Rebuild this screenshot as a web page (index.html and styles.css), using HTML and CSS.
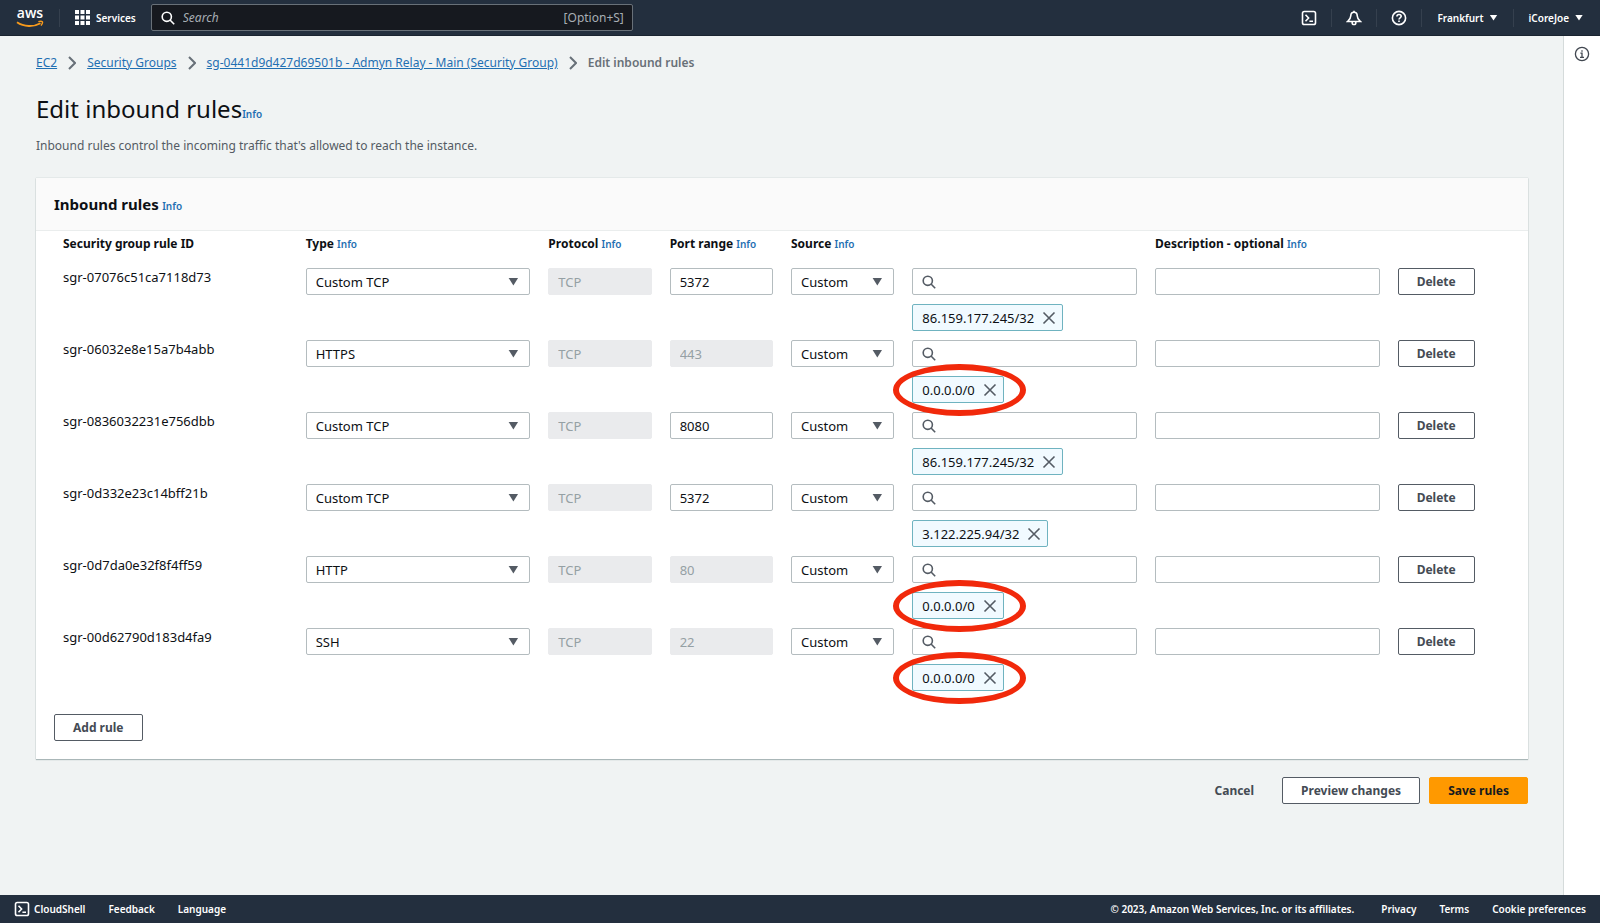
FILE: index.html
```html
<!DOCTYPE html>
<html lang="en">
<head>
<meta charset="utf-8">
<title>Edit inbound rules | EC2</title>
<link rel="stylesheet" href="styles.css">
</head>
<body>
<svg class="sprite" aria-hidden="true">
  <symbol id="i-search" viewBox="0 0 14 14"><circle cx="5.8" cy="5.8" r="4.6"/><path d="M9 9l4.2 4.2"/></symbol>
  <symbol id="i-x" viewBox="0 0 14 14"><path d="M1.5 1.5l11 11M12.5 1.5l-11 11"/></symbol>
  <symbol id="i-shell" viewBox="0 0 16 16"><rect x="1.5" y="1.5" width="13" height="13" rx="1.8"/><path d="M4.5 4.8L7.6 8l-3.1 3.2M8.4 11.3h3.6"/></symbol>
  <symbol id="i-chevron" viewBox="0 0 8 14"><path d="M1 1l6 6-6 6"/></symbol>
</svg>

<header class="topbar">
  <a class="logo" href="#" aria-label="AWS home">
    <svg viewBox="0 -5 28 30" width="28" height="30">
      <text x="14" y="10" text-anchor="middle" class="logo-text">aws</text>
      <path d="M1 14.2c7 4.8 16.500 5 23.500 1" class="logo-smile"/>
      <path d="M22.300 13.600c1.700-.4 3.500-.4 4 .1.500.6-.2 2.500-1.300 3.900" class="logo-smile tip"/>
    </svg>
  </a>
  <button class="services" type="button">
    <svg width="15" height="15" viewBox="0 0 15 15"><path d="M0 0h4v4H0zM5.500 0h4v4h-4zM11 0h4v4h-4zM0 5.500h4v4H0zM5.500 5.500h4v4h-4zM11 5.500h4v4h-4zM0 11h4v4H0zM5.500 11h4v4h-4zM11 11h4v4h-4z"/></svg>
    Services
  </button>
  <label class="topsearch">
    <svg class="icon"><use href="#i-search"/></svg>
    <input type="search" placeholder="Search" aria-label="Search">
    <span>[Option+S]</span>
  </label>
  <nav class="topnav" aria-label="Account">
    <button type="button" aria-label="CloudShell"><svg class="icon"><use href="#i-shell"/></svg></button>
    <button type="button" aria-label="Notifications"><svg class="icon" viewBox="0 0 16 16"><path d="M8 2.200c-2.200 0-3.200 1.500-3.200 3.600 0 2.800-1.300 4-3.200 5.700h12.800c-1.900-1.700-3.200-2.900-3.200-5.700 0-2.100-1-3.600-3.200-3.600z"/><path d="M8 .8v1.400M6.200 12v.9c0 2.200 3.600 2.200 3.600 0V12"/></svg></button>
    <button type="button" aria-label="Help"><svg class="icon" viewBox="0 0 16 16"><circle cx="8" cy="8" r="6.600"/><path d="M5.900 6.600c0-2.900 4.300-2.700 4.300-.3 0 1.500-2.200 1.500-2.200 3.200M8 10.600v1.500"/></svg></button>
    <button type="button" class="menu">Frankfurt</button>
    <button type="button" class="menu">iCoreJoe</button>
  </nav>
</header>

<div class="body">
  <main class="content">
    <nav class="crumbs" aria-label="Breadcrumbs">
      <a href="#">EC2</a>
      <svg><use href="#i-chevron"/></svg>
      <a href="#">Security Groups</a>
      <svg><use href="#i-chevron"/></svg>
      <a href="#">sg-0441d9d427d69501b - Admyn Relay - Main (Security Group)</a>
      <svg><use href="#i-chevron"/></svg>
      <span>Edit inbound rules</span>
    </nav>
    <div class="title"><h1>Edit inbound rules</h1><a class="info" href="#">Info</a></div>
    <p class="lead">Inbound rules control the incoming traffic that's allowed to reach the instance.</p>

    <section class="card">
      <div class="card-head"><h2>Inbound rules</h2> <a class="info" href="#">Info</a></div>
      <div class="card-body">
        <table class="rules">
          <colgroup><col class="wide"><col class="wide"><col><col><col><col class="wide"><col class="wide"><col></colgroup>
          <thead>
            <tr>
              <th scope="col">Security group rule ID</th>
              <th scope="col">Type <a class="info" href="#">Info</a></th>
              <th scope="col">Protocol <a class="info" href="#">Info</a></th>
              <th scope="col">Port range <a class="info" href="#">Info</a></th>
              <th scope="col" colspan="2">Source <a class="info" href="#">Info</a></th>
              <th scope="col">Description - optional <a class="info" href="#">Info</a></th>
              <td></td>
            </tr>
          </thead>
          <tbody>
            <tr>
              <td class="id">sgr-07076c51ca7118d73</td>
              <td><span class="select"><select aria-label="Type"><option>Custom TCP</option></select></span></td>
              <td><input class="field" aria-label="Protocol" value="TCP" disabled></td>
              <td><input class="field" aria-label="Port range" value="5372"></td>
              <td><span class="select"><select aria-label="Source"><option>Custom</option></select></span></td>
              <td><label class="field find"><svg class="icon"><use href="#i-search"/></svg><input aria-label="Source address"></label>
                <span class="tag">86.159.177.245/32<button type="button" aria-label="Remove"><svg class="icon"><use href="#i-x"/></svg></button></span></td>
              <td><input class="field" aria-label="Description"></td>
              <td><button class="btn" type="button">Delete</button></td>
            </tr>
            <tr>
              <td class="id">sgr-06032e8e15a7b4abb</td>
              <td><span class="select"><select aria-label="Type"><option>HTTPS</option></select></span></td>
              <td><input class="field" aria-label="Protocol" value="TCP" disabled></td>
              <td><input class="field" aria-label="Port range" value="443" disabled></td>
              <td><span class="select"><select aria-label="Source"><option>Custom</option></select></span></td>
              <td><label class="field find"><svg class="icon"><use href="#i-search"/></svg><input aria-label="Source address"></label>
                <span class="tag ringed">0.0.0.0/0<button type="button" aria-label="Remove"><svg class="icon"><use href="#i-x"/></svg></button></span></td>
              <td><input class="field" aria-label="Description"></td>
              <td><button class="btn" type="button">Delete</button></td>
            </tr>
            <tr>
              <td class="id">sgr-0836032231e756dbb</td>
              <td><span class="select"><select aria-label="Type"><option>Custom TCP</option></select></span></td>
              <td><input class="field" aria-label="Protocol" value="TCP" disabled></td>
              <td><input class="field" aria-label="Port range" value="8080"></td>
              <td><span class="select"><select aria-label="Source"><option>Custom</option></select></span></td>
              <td><label class="field find"><svg class="icon"><use href="#i-search"/></svg><input aria-label="Source address"></label>
                <span class="tag">86.159.177.245/32<button type="button" aria-label="Remove"><svg class="icon"><use href="#i-x"/></svg></button></span></td>
              <td><input class="field" aria-label="Description"></td>
              <td><button class="btn" type="button">Delete</button></td>
            </tr>
            <tr>
              <td class="id">sgr-0d332e23c14bff21b</td>
              <td><span class="select"><select aria-label="Type"><option>Custom TCP</option></select></span></td>
              <td><input class="field" aria-label="Protocol" value="TCP" disabled></td>
              <td><input class="field" aria-label="Port range" value="5372"></td>
              <td><span class="select"><select aria-label="Source"><option>Custom</option></select></span></td>
              <td><label class="field find"><svg class="icon"><use href="#i-search"/></svg><input aria-label="Source address"></label>
                <span class="tag">3.122.225.94/32<button type="button" aria-label="Remove"><svg class="icon"><use href="#i-x"/></svg></button></span></td>
              <td><input class="field" aria-label="Description"></td>
              <td><button class="btn" type="button">Delete</button></td>
            </tr>
            <tr>
              <td class="id">sgr-0d7da0e32f8f4ff59</td>
              <td><span class="select"><select aria-label="Type"><option>HTTP</option></select></span></td>
              <td><input class="field" aria-label="Protocol" value="TCP" disabled></td>
              <td><input class="field" aria-label="Port range" value="80" disabled></td>
              <td><span class="select"><select aria-label="Source"><option>Custom</option></select></span></td>
              <td><label class="field find"><svg class="icon"><use href="#i-search"/></svg><input aria-label="Source address"></label>
                <span class="tag ringed">0.0.0.0/0<button type="button" aria-label="Remove"><svg class="icon"><use href="#i-x"/></svg></button></span></td>
              <td><input class="field" aria-label="Description"></td>
              <td><button class="btn" type="button">Delete</button></td>
            </tr>
            <tr>
              <td class="id">sgr-00d62790d183d4fa9</td>
              <td><span class="select"><select aria-label="Type"><option>SSH</option></select></span></td>
              <td><input class="field" aria-label="Protocol" value="TCP" disabled></td>
              <td><input class="field" aria-label="Port range" value="22" disabled></td>
              <td><span class="select"><select aria-label="Source"><option>Custom</option></select></span></td>
              <td><label class="field find"><svg class="icon"><use href="#i-search"/></svg><input aria-label="Source address"></label>
                <span class="tag ringed">0.0.0.0/0<button type="button" aria-label="Remove"><svg class="icon"><use href="#i-x"/></svg></button></span></td>
              <td><input class="field" aria-label="Description"></td>
              <td><button class="btn" type="button">Delete</button></td>
            </tr>
          </tbody>
        </table>
        <button class="btn" type="button">Add rule</button>
      </div>
    </section>

    <div class="actions">
      <button class="btn plain" type="button">Cancel</button>
      <button class="btn" type="button">Preview changes</button>
      <button class="btn primary" type="button">Save rules</button>
    </div>
  </main>
  <aside class="rail">
    <button type="button" aria-label="Open help panel"><svg class="icon" viewBox="0 0 16 16"><circle cx="8" cy="8" r="6.600"/><path d="M6.400 7.200H8v4M6 11.300h4M8 4.200v1.500"/></svg></button>
  </aside>
</div>

<footer class="footer">
  <a href="#"><svg class="icon"><use href="#i-shell"/></svg>CloudShell</a>
  <a href="#">Feedback</a>
  <a href="#">Language</a>
  <span class="copy">© 2023, Amazon Web Services, Inc. or its affiliates.</span>
  <a href="#">Privacy</a>
  <a href="#">Terms</a>
  <a href="#">Cookie preferences</a>
</footer>
</body>
</html>
```

FILE: styles.css
```css
* { box-sizing: border-box; }

body {
  margin: 0;
  min-height: 100vh;
  display: flex;
  flex-direction: column;
  background: #f0f3f3;
  color: #0d1014;
  font: 13px/18px "Noto Sans", sans-serif;
}

button, input, select { font: inherit; color: inherit; margin: 0; }
button { background: none; border: 0; padding: 0; }
a { color: #1f6fb2; }
h1, h2, p { margin: 0; }

.sprite { display: none; }
.icon {
  width: 14px;
  height: 14px;
  flex: none;
  fill: none;
  stroke: currentColor;
  stroke-width: 1.6;
}

/* Top bar */
.topbar {
  display: flex;
  align-items: center;
  height: 36px;
  background: #232f3e;
  border-bottom: 1px solid #1a2430;
  color: #fff;
  font-size: 10px;
  font-weight: 600;
}
.logo { display: flex; padding: 0 15px 0 16px; }
.logo-text { font: 600 14px "Open Sans", sans-serif; fill: #fff; }
.logo-smile { fill: none; stroke: #f79a1c; stroke-width: 1.8; }
.logo-smile.tip { stroke-width: 1.4; }
.services {
  display: flex;
  align-items: center;
  gap: 6px;
  height: 18px;
  padding: 0 15px;
  border-left: 1px solid #35404e;
}
.services svg { fill: #fff; }
.topsearch {
  display: flex;
  align-items: center;
  gap: 8px;
  width: 482px;
  height: 27px;
  padding: 0 8px 0 9px;
  background: #16191f;
  border: 1px solid #687078;
  border-radius: 2px;
  font-size: 12px;
  font-weight: 400;
  color: #a7aeb4;
}
.topsearch .icon { color: #fff; }
.topsearch input { flex: 1; min-width: 0; padding: 0; border: 0; background: none; outline: 0; appearance: none; }
.topsearch input::placeholder { color: #a7aeb4; font-style: italic; opacity: 1; }
.topnav { display: flex; margin-left: auto; padding-right: 2px; }
.topnav button { display: flex; align-items: center; height: 18px; padding: 0 14px; }
.topnav button + button { border-left: 1px solid #35404e; }
.topnav .icon { width: 16px; height: 16px; }
.topnav .menu { gap: 6px; padding: 0 15px; }
.menu::after {
  content: "";
  width: 8px;
  height: 6px;
  background: #fff;
  clip-path: polygon(0 0, 100% 0, 50% 100%);
}

/* Page body */
.body { flex: 1; display: flex; }
.content { flex: 1; min-width: 0; padding: 18px 35px 18px 36px; }
.rail {
  width: 37px;
  padding-top: 10px;
  background: #fff;
  border-left: 1px solid #d5dbdb;
  display: flex;
  flex-direction: column;
  align-items: center;
}
.rail .icon { display: block; width: 16px; height: 16px; stroke-width: 1.3; color: #414750; }

.crumbs { display: flex; align-items: center; gap: 11px; font-size: 12px; }
.crumbs svg { width: 8px; height: 14px; fill: none; stroke: #687078; stroke-width: 2; }
.crumbs span { color: #687078; font-weight: 600; }

.info { font-size: 10px; font-weight: 600; text-decoration: none; }
.title { display: flex; align-items: baseline; padding-top: 20px; }
h1 { font-size: 24px; line-height: 34px; font-weight: 400; }
.lead { padding-top: 11px; color: #545b64; font-size: 12px; }

/* Rules card */
.card { margin-top: 23px; background: #fff; box-shadow: 0 1px 1px #aab7b8, 0 0 1px #aab7b8; }
.card-head { padding: 15px 18px; background: #fafafa; border-bottom: 1px solid #eaeded; }
h2 { display: inline; font-size: 15px; line-height: 22px; font-weight: 700; }
.card-body { padding: 0 18px 18px; }
.rules { width: 100%; table-layout: fixed; border-collapse: collapse; margin-bottom: 14px; }
.rules col { width: 8%; }
.rules col.wide { width: 16%; }
.rules th { padding: 4px 9px 15px; text-align: left; font-size: 12px; font-weight: 700; white-space: nowrap; }
.rules td { padding: 0 9px 9px; vertical-align: top; }

.field, .select select {
  display: block;
  width: 100%;
  height: 27px;
  padding: 0 9px;
  background: #fff;
  border: 1px solid #b4bcbf;
  border-radius: 2px;
}
.field:disabled { background: #eaebed; border-color: #eaebed; color: #95a0a4; }
.select { display: grid; align-items: center; }
.select select { grid-area: 1 / 1; appearance: none; }
.select::after {
  content: "";
  grid-area: 1 / 1;
  justify-self: end;
  width: 10px;
  height: 8px;
  margin-right: 12px;
  background: #545b64;
  clip-path: polygon(0 0, 100% 0, 50% 100%);
  pointer-events: none;
}
.find { display: flex; align-items: center; gap: 8px; color: #545b64; }
.find input { flex: 1; min-width: 0; border: 0; padding: 0; background: none; outline: 0; }

.tag {
  position: relative;
  display: flex;
  align-items: center;
  gap: 8px;
  width: fit-content;
  height: 27px;
  margin-top: 9px;
  padding: 0 6px 0 9px;
  background: #f1faff;
  border: 1px solid #6fb3c0;
  border-radius: 2px;
}
.tag button { display: flex; color: #545b64; }
.ringed::after {
  content: "";
  position: absolute;
  z-index: 1;
  inset: -13px -23px -14px -20px;
  border: 6px solid #f1290b;
  border-radius: 50%;
  pointer-events: none;
}

.btn {
  height: 27px;
  padding: 0 18px;
  background: #fff;
  border: 1px solid #545b64;
  border-radius: 2px;
  color: #444b54;
  font-size: 12px;
  font-weight: 700;
  white-space: nowrap;
}
.btn.plain { background: none; border-color: transparent; }
.btn.primary { background: #ff9900; border-color: #ff9900; color: #16191f; }
.actions { display: flex; justify-content: flex-end; gap: 9px; padding-top: 18px; }

/* Footer */
.footer {
  display: flex;
  align-items: center;
  gap: 23px;
  height: 28px;
  padding: 0 14px;
  background: #232f3e;
  color: #fff;
  font-size: 10px;
  font-weight: 600;
}
.footer a { display: flex; align-items: center; gap: 4px; color: inherit; text-decoration: none; }
.footer .icon { width: 16px; height: 16px; }
.copy { margin: 0 4px 0 auto; }
```
